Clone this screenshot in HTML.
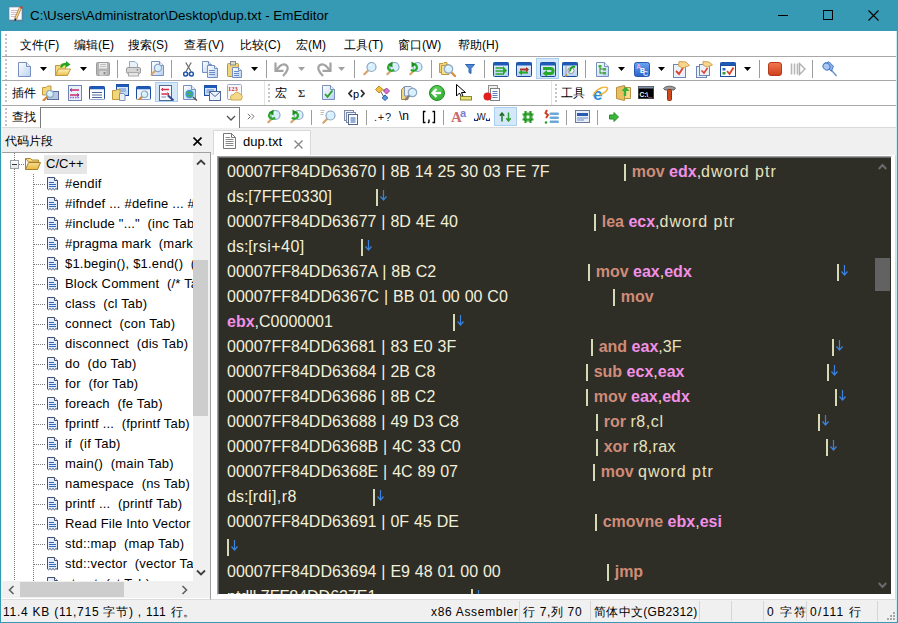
<!DOCTYPE html>
<html><head><meta charset="utf-8">
<style>
*{margin:0;padding:0;box-sizing:border-box}
html,body{width:898px;height:623px;overflow:hidden;background:#fff;font-family:"Liberation Sans",sans-serif;color:#000}
.a{position:absolute}
.t{position:absolute;white-space:pre;line-height:1}
#title{left:0;top:0;width:898px;height:31px;background:#369ab5}
#menu{left:1px;top:31px;width:896px;height:27px;background:#fff;border-bottom:1px solid #dadada}
.hl{position:absolute;height:1px;background:#a8a8a8}
.vs{position:absolute;width:1px;background:#a0a0a0}
.grip{position:absolute;width:2px;background-image:linear-gradient(#c4c4c4 50%,transparent 50%);background-size:2px 4px}
.m{font-size:12px;top:39px}
#ed{left:219px;top:158px;width:672px;height:436px;background:#2e2d26;overflow:hidden}
.ln{position:absolute;left:8px;font-size:16px;color:#f2f0da;white-space:pre;line-height:1;word-spacing:0.45px}
.p{position:absolute;font-size:16px;color:#e6e2bf;white-space:pre;line-height:1}
.k{color:#d08c78;font-weight:bold}
.r{color:#f290e6;font-weight:bold}
.w{color:#f2f0da}
.ar{color:#3b94e6}
.pp{position:absolute;width:2px;height:17px;background:#d4d9b6}
.dn{position:absolute}
.tr{position:absolute;font-size:13px;white-space:pre;line-height:1;color:#000}
.st{position:absolute;font-size:12px;white-space:pre;line-height:1;top:606px}
.dv{position:absolute;width:1px;background-image:linear-gradient(#7a7a7a 50%,transparent 50%);background-size:1px 2px}
.dh{position:absolute;height:1px;background-image:linear-gradient(90deg,#7a7a7a 50%,transparent 50%);background-size:2px 1px}
.ss{position:absolute;top:601px;width:1px;height:20px;background:#d6d6d6}
</style></head><body>
<!-- window border -->
<div class="a" style="left:0;top:0;width:898px;height:623px;background:#369ab5"></div>
<div class="a" style="left:1px;top:31px;width:896px;height:591px;background:#fff"></div>

<!-- title bar -->
<div id="title" class="a">
  <svg class="a" style="left:8px;top:6px" width="17" height="17"><rect x="2" y="2" width="14" height="14" fill="#5a7fa0" opacity="0.5"/><rect x="1" y="1" width="13" height="13" fill="#f8fbff" stroke="#6a7a9a" stroke-width="0.6"/><path d="M3 4.5H10M3 6.5H10M3 8.5H9M3 10.5H8" stroke="#c8a0a0" stroke-width="0.7"/><path d="M12.5 1.5L7.5 13" stroke="#b07830" stroke-width="2.8"/><path d="M12.5 1.5L7.5 13" stroke="#f2d890" stroke-width="1.4"/><path d="M12.3 1L14.3 2" stroke="#d04020" stroke-width="2"/><path d="M7.6 12.5L7 14.5" stroke="#202020" stroke-width="1.6"/></svg>
  <div class="t" style="left:30px;top:9px;font-size:13.4px;color:#000">C:\Users\Administrator\Desktop\dup.txt - EmEditor</div>
  <div class="a" style="left:778px;top:15px;width:10px;height:1px;background:#000"></div>
  <div class="a" style="left:823px;top:10px;width:10px;height:10px;border:1px solid #000"></div>
  <svg class="a" style="left:868px;top:10px" width="11" height="11"><path d="M0.5 0.5L10.5 10.5M10.5 0.5L0.5 10.5" stroke="#000" stroke-width="1.1"/></svg>
</div>

<!-- menu -->
<div class="grip" style="left:5px;top:34px;height:22px"></div>
<div class="t m" style="left:20px">文件(F)</div>
<div class="t m" style="left:74px">编辑(E)</div>
<div class="t m" style="left:128px">搜索(S)</div>
<div class="t m" style="left:184px">查看(V)</div>
<div class="t m" style="left:240px">比较(C)</div>
<div class="t m" style="left:296px">宏(M)</div>
<div class="t m" style="left:344px">工具(T)</div>
<div class="t m" style="left:398px">窗口(W)</div>
<div class="t m" style="left:458px">帮助(H)</div>

<div class="hl" style="left:1px;top:56px;width:896px"></div>
<div class="hl" style="left:1px;top:80px;width:896px"></div>
<div class="hl" style="left:1px;top:105px;width:896px"></div>
<div class="hl" style="left:1px;top:127px;width:896px;background:#dadada"></div>

<!-- toolbar grips -->
<div class="grip" style="left:5px;top:59px;height:21px"></div>
<div class="grip" style="left:5px;top:84px;height:19px"></div>
<div class="grip" style="left:5px;top:108px;height:18px"></div>

<!-- plugin toolbar text -->

<!-- find input -->
<div class="a" style="left:40px;top:107px;width:200px;height:21px;border:1px solid #7c7c7c;border-bottom:none;background:#fff"></div>

<!--tb-->
<svg class="a" style="left:0;top:0" width="0" height="0"><defs><linearGradient id="gdoc" x1="0" y1="0" x2="1" y2="1"><stop offset="0" stop-color="#fff"/><stop offset="1" stop-color="#b9d1f2"/></linearGradient><linearGradient id="gfold" x1="0" y1="0" x2="0" y2="1"><stop offset="0" stop-color="#fff4c0"/><stop offset="1" stop-color="#e9bd4a"/></linearGradient><linearGradient id="gwin" x1="0" y1="0" x2="0" y2="1"><stop offset="0" stop-color="#e6f2ff"/><stop offset="1" stop-color="#b5d3f5"/></linearGradient><linearGradient id="gred" x1="0" y1="0" x2="0" y2="1"><stop offset="0" stop-color="#f27a50"/><stop offset="1" stop-color="#cf3f1c"/></linearGradient><linearGradient id="gabc" x1="0" y1="0" x2="0" y2="1"><stop offset="0" stop-color="#6aa6f0"/><stop offset="1" stop-color="#2a62c8"/></linearGradient></defs></svg>
<svg class="a" style="left:18px;top:62px" width="13" height="15"><path d="M0.5 0.5H8.5L12.5 4.5V14.5H0.5Z" fill="url(#gdoc)" stroke="#7890c0"/><path d="M8.5 0.5V4.5H12.5" fill="#e8f0fb" stroke="#7890c0"/></svg>
<svg class="a" style="left:40px;top:67px" width="7" height="4"><path d="M0 0H7L3.5 4Z" fill="#000"/></svg>
<svg class="a" style="left:55px;top:61px" width="16" height="16"><path d="M0.5 4.5H5L6.5 3H10.5V14.5H0.5Z" fill="#f3d87a" stroke="#c19a3e"/><path d="M0.5 14.5L3.5 8H15.5L12.5 14.5Z" fill="url(#gfold)" stroke="#c19a3e"/><path d="M6 6.5A5 4.5 0 0 1 12.5 3.2" stroke="#22a325" stroke-width="2.2" fill="none"/><path d="M11 0L15.5 3.5L11 6.5Z" fill="#22a325"/></svg>
<svg class="a" style="left:80px;top:67px" width="7" height="4"><path d="M0 0H7L3.5 4Z" fill="#000"/></svg>
<svg class="a" style="left:96px;top:62px" width="14" height="14"><rect x="0.5" y="0.5" width="13" height="13" rx="1" fill="#b4b4b4" stroke="#9c9c9c"/><rect x="3" y="1" width="8" height="5.5" fill="#ececec"/><path d="M4 2.5H10M4 4.5H10" stroke="#c0c0c0"/><rect x="3.5" y="9" width="7" height="4.5" fill="#d6d6d6"/><rect x="7.5" y="10" width="2" height="2.5" fill="#8a8a8a"/></svg>
<div class="a" style="left:117px;top:60px;width:1px;height:18px;background:#9c9c9c"></div>
<svg class="a" style="left:126px;top:61px" width="15" height="16"><path d="M3.5 0.5L9 0.5L11.5 3V7H3.5Z" fill="#e8f0f8" stroke="#9aaac0"/><rect x="0.5" y="6.5" width="14" height="6" rx="1.5" fill="#d4d4d4" stroke="#9c9c9c"/><rect x="2.5" y="11.5" width="10" height="3.5" fill="#e6e6e6" stroke="#aaaaaa"/><circle cx="11.5" cy="8.8" r="0.9" fill="#808080"/></svg>
<svg class="a" style="left:150px;top:61px" width="14" height="16"><path d="M1.5 0.5H9.5L13.5 4.5V14.5H1.5Z" fill="url(#gdoc)" stroke="#7890c0"/><path d="M9.5 0.5V4.5H13.5" fill="#e8f0fb" stroke="#7890c0"/><path d="M5.5 9.5L1.5 13.5" stroke="#d9a26c" stroke-width="2.2" stroke-linecap="round"/><circle cx="8" cy="7" r="3.6" fill="#d6f0fd" stroke="#8ea6c2" stroke-width="1.2"/><path d="M6.0 6.0A2.2 2.2 0 0 1 8.0 4.5" stroke="#fff" stroke-width="1" fill="none"/></svg>
<div class="a" style="left:171px;top:60px;width:1px;height:18px;background:#9c9c9c"></div>
<svg class="a" style="left:183px;top:62px" width="11" height="15"><path d="M3 9.5L8.2 0.5M8 9.5L2.8 0.5" stroke="#6f6f6f" stroke-width="1.3"/><circle cx="2.6" cy="12" r="2" fill="none" stroke="#1f56b0" stroke-width="1.6"/><circle cx="8.4" cy="12" r="2" fill="none" stroke="#1f56b0" stroke-width="1.6"/></svg>
<svg class="a" style="left:202px;top:61px" width="17" height="17"><path d="M0.5 0.5H6.5L9.5 3.5V11.5H0.5Z" fill="url(#gdoc)" stroke="#7890c0"/><path d="M6.5 0.5V3.5H9.5" fill="#e8f0fb" stroke="#7890c0"/><path d="M5.5 4.5H12.5L15.5 7.5V16.5H5.5Z" fill="url(#gdoc)" stroke="#7890c0"/><path d="M12.5 4.5V7.5H15.5" fill="#e8f0fb" stroke="#7890c0"/><path d="M7 9.5H13" stroke="#6b8cc8"/><path d="M7 11.5H13" stroke="#6b8cc8"/><path d="M7 13.5H13" stroke="#6b8cc8"/></svg>
<svg class="a" style="left:227px;top:61px" width="16" height="17"><rect x="0.5" y="2.5" width="11" height="13" rx="1" fill="#f0d67a" stroke="#b69746"/><rect x="3.5" y="0.5" width="5" height="3.5" fill="#d8d8d8" stroke="#8a8a8a"/><path d="M5.5 6.5H11.5L14.5 9.5V16.5H5.5Z" fill="url(#gdoc)" stroke="#7890c0"/><path d="M11.5 6.5V9.5H14.5" fill="#e8f0fb" stroke="#7890c0"/><path d="M7 10.5H12" stroke="#6b8cc8"/><path d="M7 12.5H12" stroke="#6b8cc8"/><path d="M7 14.5H12" stroke="#6b8cc8"/></svg>
<svg class="a" style="left:251px;top:67px" width="7" height="4"><path d="M0 0H7L3.5 4Z" fill="#000"/></svg>
<div class="a" style="left:266px;top:60px;width:1px;height:18px;background:#9c9c9c"></div>
<svg class="a" style="left:274px;top:61px" width="17" height="16"><path d="M1.5 1.5V9.8H9.5" stroke="#a3a3a3" stroke-width="2.2" fill="none"/><path d="M2.5 9C6 4 9.5 2.5 12 4C15 6 14 10 9 15" stroke="#a3a3a3" stroke-width="2.2" fill="none"/></svg>
<svg class="a" style="left:298px;top:67px" width="7" height="4"><path d="M0 0H7L3.5 4Z" fill="#a0a0a0"/></svg>
<svg class="a" style="left:315px;top:61px" width="17" height="16"><path d="M15.5 1.5V9.8H7.5" stroke="#a3a3a3" stroke-width="2.2" fill="none"/><path d="M14.5 9C11 4 7.5 2.5 5 4C2 6 3 10 8 15" stroke="#a3a3a3" stroke-width="2.2" fill="none"/></svg>
<svg class="a" style="left:338px;top:67px" width="7" height="4"><path d="M0 0H7L3.5 4Z" fill="#a0a0a0"/></svg>
<div class="a" style="left:354px;top:60px;width:1px;height:18px;background:#9c9c9c"></div>
<svg class="a" style="left:361px;top:61px" width="17" height="17"><path d="M7.3 9.2L3.3 13.2" stroke="#d9a26c" stroke-width="2.2" stroke-linecap="round"/><circle cx="10.5" cy="6" r="4.5" fill="#d6f0fd" stroke="#8ea6c2" stroke-width="1.2"/><path d="M8.5 5.0A2.2 2.2 0 0 1 10.5 3.5" stroke="#fff" stroke-width="1" fill="none"/></svg>
<svg class="a" style="left:384px;top:61px" width="17" height="17"><path d="M7.3 9.2L3.3 13.2" stroke="#d9a26c" stroke-width="2.2" stroke-linecap="round"/><circle cx="10.5" cy="6" r="4.5" fill="#d6f0fd" stroke="#8ea6c2" stroke-width="1.2"/><path d="M8.5 5.0A2.2 2.2 0 0 1 10.5 3.5" stroke="#fff" stroke-width="1" fill="none"/><path d="M7 3.2A3.3 3.3 0 1 0 10 8.5" stroke="#2aa82a" stroke-width="2.2" fill="none"/><path d="M4 3.5L8.5 0.5V6.5Z" fill="#1e8e1e"/></svg>
<svg class="a" style="left:407px;top:61px" width="17" height="17"><path d="M7.3 9.2L3.3 13.2" stroke="#d9a26c" stroke-width="2.2" stroke-linecap="round"/><circle cx="10.5" cy="6" r="4.5" fill="#d6f0fd" stroke="#8ea6c2" stroke-width="1.2"/><path d="M8.5 5.0A2.2 2.2 0 0 1 10.5 3.5" stroke="#fff" stroke-width="1" fill="none"/><path d="M7 3.2A3.3 3.3 0 1 1 4 8.5" stroke="#2aa82a" stroke-width="2.2" fill="none"/><path d="M4.5 0.5L9 3.5L4.5 6.5Z" fill="#1e8e1e"/></svg>
<div class="a" style="left:431px;top:60px;width:1px;height:18px;background:#9c9c9c"></div>
<svg class="a" style="left:439px;top:61px" width="17" height="17"><path d="M0.5 2.5H4L5 1.5H8V11.5H0.5Z" fill="#f0d47a" stroke="#c19a3e"/><path d="M2.5 4.5H6L7 3.5H10V13.5H2.5Z" fill="#f5df92" stroke="#c19a3e"/><path d="M12.5 11.5L16 15" stroke="#d58a3a" stroke-width="2.2" stroke-linecap="round"/><circle cx="9.5" cy="8" r="4.2" fill="#d6f0fd" stroke="#8ea6c2" stroke-width="1.2"/><path d="M7.5 7.0A2.2 2.2 0 0 1 9.5 5.5" stroke="#fff" stroke-width="1" fill="none"/></svg>
<svg class="a" style="left:465px;top:64px" width="10" height="10"><path d="M0.5 0.5H9.5L6 4.5V9.5L4 8.5V4.5Z" fill="#4a86d4" stroke="#2f64b0"/></svg>
<div class="a" style="left:484px;top:60px;width:1px;height:18px;background:#9c9c9c"></div>
<svg class="a" style="left:493px;top:62px" width="16" height="15"><rect x="0.5" y="0.5" width="15" height="14" rx="1" fill="url(#gwin)" stroke="#1d4c9c"/><rect x="0.5" y="0.5" width="15" height="3" fill="#1e5bb8"/><path d="M2.5 6H11M2.5 9H11M2.5 12H11" stroke="#2aa82a" stroke-width="1.6"/><path d="M10 4L14 8.5L10 13Z" fill="#2aa82a"/></svg>
<svg class="a" style="left:516px;top:62px" width="16" height="15"><rect x="0.5" y="0.5" width="15" height="14" rx="1" fill="url(#gwin)" stroke="#1d4c9c"/><rect x="0.5" y="0.5" width="15" height="3" fill="#1e5bb8"/><path d="M4 7.5H12" stroke="#b03020" stroke-width="2"/><path d="M12 10.5H5" stroke="#28a828" stroke-width="2.2"/><path d="M6 7.5L2.5 10.5L6 13.5Z" fill="#28a828"/><path d="M10 5L13 7.5L10 10Z" fill="#b03020"/></svg>
<div class="a" style="left:536px;top:58px;width:23px;height:21px;background:#d5e8f9;border:1px solid #a9d0f2"></div>
<svg class="a" style="left:540px;top:62px" width="16" height="15"><rect x="0.5" y="0.5" width="15" height="14" rx="1" fill="url(#gwin)" stroke="#1d4c9c"/><rect x="0.5" y="0.5" width="15" height="3" fill="#1e5bb8"/><path d="M3 6.5H10.5A2.5 2.5 0 0 1 10.5 11.5H6" stroke="#2aa82a" stroke-width="3" fill="none"/><path d="M7 8L2.5 11.5L7 14.5Z" fill="#2aa82a"/></svg>
<svg class="a" style="left:562px;top:62px" width="16" height="15"><rect x="0.5" y="0.5" width="15" height="14" rx="1" fill="url(#gwin)" stroke="#1d4c9c"/><rect x="0.5" y="0.5" width="15" height="3" fill="#1e5bb8"/><path d="M4 4V14" stroke="#a0a0a0"/><circle cx="9" cy="8.5" r="3" fill="#fff" stroke="#909090"/><path d="M8 9.5A4 4 0 0 1 13 5" stroke="#22a325" stroke-width="2" fill="none"/><path d="M5 12.5L3 14.5" stroke="#d58a3a" stroke-width="1.6"/></svg>
<div class="a" style="left:585px;top:60px;width:1px;height:18px;background:#9c9c9c"></div>
<svg class="a" style="left:596px;top:62px" width="13" height="15"><path d="M0.5 0.5H8.5L12.5 4.5V14.5H0.5Z" fill="url(#gdoc)" stroke="#7890c0"/><path d="M8.5 0.5V4.5H12.5" fill="#e8f0fb" stroke="#7890c0"/><path d="M4 4V11.5M4 7H7M4 11H7" stroke="#2a8a2a"/><rect x="2.5" y="3" width="3" height="2.5" fill="#3cb43c"/><rect x="7" y="6" width="3" height="2.5" fill="#3cb43c"/><rect x="7" y="10" width="3" height="2.5" fill="#3cb43c"/></svg>
<svg class="a" style="left:618px;top:67px" width="7" height="4"><path d="M0 0H7L3.5 4Z" fill="#000"/></svg>
<svg class="a" style="left:634px;top:62px" width="16" height="15"><rect x="0.5" y="0.5" width="15" height="14" rx="2" fill="url(#gabc)" stroke="#2658b0"/><text x="2" y="7" font-size="7" font-family="Liberation Sans" fill="#f2a8e8" font-weight="bold">A</text><text x="6" y="10.5" font-size="7" font-family="Liberation Sans" fill="#fff" font-weight="bold">B</text><text x="9" y="14" font-size="7" font-family="Liberation Sans" fill="#d8e8ff" font-weight="bold">C</text></svg>
<svg class="a" style="left:658px;top:67px" width="7" height="4"><path d="M0 0H7L3.5 4Z" fill="#000"/></svg>
<svg class="a" style="left:673px;top:61px" width="17" height="17"><rect x="0.5" y="3.5" width="12" height="13" fill="#e9f1fb" stroke="#6d84b4"/><path d="M3 10L6 13L10.5 6" stroke="#e0402a" stroke-width="1.8" fill="none"/><path d="M6 0.5L13 1L16.5 4.5L10 7L5.5 5Z" fill="#f6d590" stroke="#d3a050"/></svg>
<svg class="a" style="left:696px;top:61px" width="17" height="17"><rect x="0.5" y="5.5" width="10" height="11" fill="#e9f1fb" stroke="#6d84b4"/><rect x="3.5" y="3.5" width="10" height="11" fill="#e9f1fb" stroke="#6d84b4"/><path d="M5.5 9.5L8 12L11.5 7" stroke="#e0402a" stroke-width="1.6" fill="none"/><path d="M7 0.5L13 1L16.5 4L11 6L7 4Z" fill="#f6d590" stroke="#d3a050"/></svg>
<svg class="a" style="left:720px;top:62px" width="16" height="15"><rect x="0.5" y="0.5" width="15" height="14" rx="1" fill="url(#gwin)" stroke="#1d4c9c"/><rect x="0.5" y="0.5" width="15" height="3" fill="#1e5bb8"/><rect x="0.5" y="3.5" width="15" height="11" fill="#fff" stroke="#1d4c9c"/><rect x="2.5" y="6" width="3" height="2.5" fill="#2a6ac8"/><rect x="2.5" y="10" width="3" height="2.5" fill="#28a030"/><path d="M7 9L9.5 12L13.5 5.5" stroke="#e0402a" stroke-width="1.8" fill="none"/></svg>
<svg class="a" style="left:744px;top:67px" width="7" height="4"><path d="M0 0H7L3.5 4Z" fill="#000"/></svg>
<div class="a" style="left:759px;top:60px;width:1px;height:18px;background:#9c9c9c"></div>
<svg class="a" style="left:768px;top:62px" width="14" height="14"><rect x="0.5" y="0.5" width="13" height="13" rx="2.5" fill="url(#gred)" stroke="#b63a1a"/></svg>
<svg class="a" style="left:790px;top:62px" width="16" height="14"><path d="M1.5 1.5V12.5M4.5 1.5V12.5M7.5 1.5V12.5" stroke="#b8b8b8" stroke-width="1.6"/><path d="M9.5 1.5L15 7L9.5 12.5Z" fill="#fff" stroke="#b0b0b0" stroke-width="1.4"/></svg>
<div class="a" style="left:812px;top:60px;width:1px;height:18px;background:#9c9c9c"></div>
<svg class="a" style="left:821px;top:61px" width="17" height="17"><path d="M9 7.5L15.5 15" stroke="#6a90d0" stroke-width="1.4"/><path d="M3 3L8 0.8L12.5 5.3L10.2 10.3Z" fill="#8bb4ec" stroke="#4a78c0"/><ellipse cx="5.5" cy="5.5" rx="3.2" ry="3.6" transform="rotate(-45 5.5 5.5)" fill="#a9c9f4" stroke="#4a78c0"/></svg>
<div class="t" style="left:12px;top:87px;font-size:12px">插件</div>
<svg class="a" style="left:42px;top:85px" width="17" height="16"><path d="M0.5 2.5H4L5.5 1H9V10H0.5Z" fill="#f2d67a" stroke="#c19a3e"/><rect x="5.5" y="6.5" width="11" height="8" fill="#b8c8e0" stroke="#5a70a0"/><path d="M5.6 11.4L1.6 15.4" stroke="#d58a3a" stroke-width="2.2" stroke-linecap="round"/><circle cx="8" cy="9" r="3.4" fill="#d6f0fd" stroke="#8ea6c2" stroke-width="1.2"/><path d="M6.0 8.0A2.2 2.2 0 0 1 8.0 6.5" stroke="#fff" stroke-width="1" fill="none"/></svg>
<svg class="a" style="left:68px;top:85px" width="14" height="16"><rect x="0.5" y="0.5" width="13" height="15" fill="#e9f1fb" stroke="#6d84b4"/><path d="M2 5H11M2 10H11" stroke="#d02a6a" stroke-width="1.4"/><path d="M4 3.5L2 5L4 6.5M9 8.5L11 10L9 11.5" stroke="#7a3ab0" fill="none"/><path d="M2 12.5H11" stroke="#9a5ad0" stroke-width="1.4" stroke-dasharray="1.5 1"/></svg>
<svg class="a" style="left:89px;top:86px" width="16" height="14"><rect x="0.5" y="0.5" width="15" height="13" rx="1" fill="url(#gwin)" stroke="#1d4c9c"/><rect x="0.5" y="0.5" width="15" height="3" fill="#1e5bb8"/><rect x="1" y="3.5" width="14" height="10" fill="#fff"/><path d="M3 6.5H13M3 9H13M3 11.5H13" stroke="#4f6a9a"/></svg>
<svg class="a" style="left:112px;top:84px" width="17" height="17"><rect x="4.5" y="0.5" width="12" height="11" fill="url(#gwin)" stroke="#1d4c9c"/><rect x="4.5" y="0.5" width="12" height="2.5" fill="#1e5bb8"/><path d="M7 5H14M7 7H14" stroke="#6b8cc8"/><path d="M0.5 6.5H4L5 5.5H8V15.5H0.5Z" fill="#f2d67a" stroke="#c19a3e"/><path d="M7.5 9.5H11.5L13 11V16.5H7.5Z" fill="#e8eef8" stroke="#8094b8"/></svg>
<svg class="a" style="left:136px;top:86px" width="15" height="14"><rect x="0.5" y="0.5" width="14" height="13" rx="1" fill="url(#gwin)" stroke="#1d4c9c"/><rect x="0.5" y="0.5" width="14" height="3" fill="#1e5bb8"/><rect x="1" y="3.5" width="13" height="10" fill="#f0f6ff"/><path d="M6.3 10.5L2.3 14.5" stroke="#d58a3a" stroke-width="2.2" stroke-linecap="round"/><circle cx="8.5" cy="8.3" r="3.2" fill="#d6f0fd" stroke="#8ea6c2" stroke-width="1.2"/><path d="M6.5 7.3A2.2 2.2 0 0 1 8.5 5.8" stroke="#fff" stroke-width="1" fill="none"/></svg>
<div class="a" style="left:155px;top:82px;width:23px;height:20px;background:#d5e8f9;border:1px solid #a9d0f2"></div>
<svg class="a" style="left:159px;top:85px" width="16" height="16"><rect x="0.5" y="0.5" width="12" height="15" fill="#f6f8fc" stroke="#53688e"/><path d="M2.5 4.5H10M2.5 9H10" stroke="#d3324a" stroke-width="1.3"/><path d="M4 3L2.5 4.5L4 6M8.5 7.5L10 9L8.5 10.5" stroke="#d3324a" fill="none"/><path d="M2.5 12H7" stroke="#7a8ab0"/><path d="M9 10.5L14.5 15.5" stroke="#2a4a8a" stroke-width="2"/></svg>
<svg class="a" style="left:183px;top:85px" width="15" height="16"><path d="M0.5 0.5H8.5L12.5 4.5V14.5H0.5Z" fill="url(#gdoc)" stroke="#7890c0"/><path d="M8.5 0.5V4.5H12.5" fill="#e8f0fb" stroke="#7890c0"/><circle cx="6.5" cy="9" r="4.2" fill="#3d9ad8"/><path d="M3.5 7.5C5 6 7 9 9 7.5M4 11C6 10 7 12 9.5 10.5" stroke="#46b046" stroke-width="1.6" fill="none"/><path d="M10 12L14 15.5" stroke="#505050" stroke-width="1.4"/></svg>
<svg class="a" style="left:204px;top:85px" width="17" height="16"><rect x="0.5" y="0.5" width="12" height="10" fill="url(#gwin)" stroke="#1d4c9c"/><rect x="0.5" y="0.5" width="12" height="2.5" fill="#1e5bb8"/><path d="M2.5 5H10M2.5 7H10" stroke="#6b8cc8"/><rect x="5.5" y="6.5" width="11" height="9" fill="#eef3fb" stroke="#4f6a9a"/><path d="M6 7L11 11.5L16 7" stroke="#4f6a9a" fill="none"/></svg>
<svg class="a" style="left:227px;top:84px" width="16" height="17"><rect x="0.5" y="0.5" width="14" height="15" rx="1" fill="#f4f7fc" stroke="#9aaacc"/><text x="1" y="6.5" font-size="6.5" font-family="Liberation Serif" fill="#d02a2a" font-weight="bold">123</text><path d="M4 16C3 13 4 10 6 11L8.5 8.5C10.5 7.5 13.5 9.5 15.5 12.5L14 16Z" fill="#f2d888" stroke="#d0a850"/></svg>
<div class="a" style="left:264px;top:81px;width:1px;height:24px;background:#e3e3e3"></div>
<div class="grip" style="left:268px;top:84px;height:19px"></div>
<div class="t" style="left:275px;top:87px;font-size:12px">宏</div>
<div class="t" style="left:298px;top:88px;font-size:11px;font-weight:bold;font-family:Liberation Serif;color:#383838">Σ</div>
<svg class="a" style="left:322px;top:85px" width="13" height="16"><path d="M0.5 0.5H8.5L12.5 4.5V14.5H0.5Z" fill="url(#gdoc)" stroke="#7890c0"/><path d="M8.5 0.5V4.5H12.5" fill="#e8f0fb" stroke="#7890c0"/><path d="M3 9L5.5 11.8L10.5 5.5" stroke="#2aa02a" stroke-width="1.8" fill="none"/></svg>
<svg class="a" style="left:348px;top:87px" width="17" height="14"><path d="M4 3L1 6.5L4 10M13 3L16 6.5L13 10" stroke="#303030" stroke-width="1.8" fill="none"/><text x="5" y="10.5" font-size="11" font-family="Liberation Sans" fill="#000">p</text></svg>
<svg class="a" style="left:375px;top:85px" width="16" height="16"><path d="M4 1L8 4.5L4 8L0.5 4.5Z" fill="#f0c040" stroke="#b88a20"/><path d="M11.5 3L14.5 6L11.5 9L8.5 6Z" fill="#e070d0" stroke="#a040a0"/><path d="M10 10L13 12.8L10 15.5L7 12.8Z" fill="#5a9ae0" stroke="#3060a8"/><path d="M6 7L9 12M8 5L10 5" stroke="#606060"/></svg>
<svg class="a" style="left:401px;top:84px" width="18" height="17"><path d="M0.5 5.5L3 3H7V15.5H0.5Z" fill="#f2d67a" stroke="#a88040"/><path d="M3.5 2.5H10L12 4.5V12H3.5Z" fill="#e8eef8" stroke="#8094b8"/><path d="M8.6 11.4L4.6 15.4" stroke="#808080" stroke-width="2.2" stroke-linecap="round"/><circle cx="11.5" cy="8.5" r="4.2" fill="#d6f0fd" stroke="#8ea6c2" stroke-width="1.2"/><path d="M9.5 7.5A2.2 2.2 0 0 1 11.5 6.0" stroke="#fff" stroke-width="1" fill="none"/></svg>
<svg class="a" style="left:429px;top:85px" width="16" height="16"><circle cx="8" cy="8" r="7.5" fill="#3bb83b" stroke="#238a23"/><circle cx="8" cy="6" r="5" fill="#6ad06a" opacity="0.6"/><path d="M3.5 8H12" stroke="#fff" stroke-width="2.2"/><path d="M7.5 4L3.5 8L7.5 12" stroke="#fff" stroke-width="2.2" fill="none"/></svg>
<svg class="a" style="left:456px;top:84px" width="16" height="17"><path d="M0.5 0.5V12L3.5 9L6 14L7.5 13.5L5.5 8.5H9.5Z" fill="#fff" stroke="#000"/><rect x="4.5" y="12.5" width="11" height="3.5" fill="#e8e070" stroke="#8a8a30"/></svg>
<svg class="a" style="left:483px;top:85px" width="17" height="16"><rect x="5.5" y="0.5" width="9" height="11" fill="#f0f0f0" stroke="#909090"/><rect x="7.5" y="3.5" width="9" height="12" fill="#fff" stroke="#808080"/><path d="M9.5 6.5H14.5M9.5 8.5H14.5M9.5 10.5H14.5M9.5 12.5H14.5" stroke="#5a80c0"/><circle cx="4.5" cy="11.5" r="4" fill="#e02020"/></svg>
<div class="a" style="left:551px;top:81px;width:1px;height:24px;background:#e3e3e3"></div>
<div class="grip" style="left:555px;top:84px;height:19px"></div>
<div class="t" style="left:561px;top:87px;font-size:12px">工具</div>
<svg class="a" style="left:592px;top:85px" width="17" height="16"><text x="1" y="14.5" font-size="17" font-family="Liberation Sans" font-weight="bold" fill="#2a8ae0">e</text><path d="M1 11C4 3 13 1 15.5 3C16 5 12 8 8 10" stroke="#f0b030" stroke-width="1.4" fill="none"/></svg>
<svg class="a" style="left:616px;top:85px" width="16" height="16"><path d="M0.5 2.5L8.5 0.5V15.5L0.5 13.5Z" fill="#e8c060" stroke="#b89040"/><path d="M8.5 2.5H14.5V13.5H8.5Z" fill="#f5dc90" stroke="#b89040"/><path d="M9 11V5" stroke="#3ab03a" stroke-width="2.4"/><path d="M5.5 6L9.5 1.5L13.5 6Z" fill="#3ab03a"/></svg>
<svg class="a" style="left:638px;top:86px" width="16" height="13"><rect x="0.5" y="0.5" width="15" height="12" fill="#000" stroke="#404040"/><rect x="0.5" y="0.5" width="15" height="2" fill="#8090a8"/><text x="1.5" y="10.5" font-size="6.5" font-family="Liberation Sans" font-weight="bold" fill="#fff">C:\_</text></svg>
<svg class="a" style="left:663px;top:85px" width="13" height="16"><path d="M0.5 3.5C3 0.5 9 0.5 12.5 3L11 5H2Z" fill="#9a9a9a" stroke="#606060"/><rect x="4.5" y="4.5" width="4" height="11" rx="1" fill="#d04a20" stroke="#983010"/></svg>
<div class="t" style="left:12px;top:111px;font-size:12px">查找</div>
<svg class="a" style="left:226px;top:115px" width="10" height="6"><path d="M1 1L5 5L9 1" stroke="#505050" stroke-width="1.3" fill="none"/></svg>
<svg class="a" style="left:247px;top:113px" width="8" height="7"><path d="M0.8 0.8L3.5 3.5L0.8 6.2M4.3 0.8L7 3.5L4.3 6.2" stroke="#707070" stroke-width="1" fill="none"/></svg>
<svg class="a" style="left:265px;top:109px" width="17" height="17"><path d="M7.3 9.2L3.3 13.2" stroke="#d9a26c" stroke-width="2.2" stroke-linecap="round"/><circle cx="10.5" cy="6" r="4.5" fill="#d6f0fd" stroke="#8ea6c2" stroke-width="1.2"/><path d="M8.5 5.0A2.2 2.2 0 0 1 10.5 3.5" stroke="#fff" stroke-width="1" fill="none"/><path d="M7 3.2A3.3 3.3 0 1 0 10 8.5" stroke="#2aa82a" stroke-width="2.2" fill="none"/><path d="M4 3.5L8.5 0.5V6.5Z" fill="#1e8e1e"/></svg>
<svg class="a" style="left:288px;top:109px" width="17" height="17"><path d="M7.3 9.2L3.3 13.2" stroke="#d9a26c" stroke-width="2.2" stroke-linecap="round"/><circle cx="10.5" cy="6" r="4.5" fill="#d6f0fd" stroke="#8ea6c2" stroke-width="1.2"/><path d="M8.5 5.0A2.2 2.2 0 0 1 10.5 3.5" stroke="#fff" stroke-width="1" fill="none"/><path d="M7 3.2A3.3 3.3 0 1 1 4 8.5" stroke="#2aa82a" stroke-width="2.2" fill="none"/><path d="M4.5 0.5L9 3.5L4.5 6.5Z" fill="#1e8e1e"/></svg>
<div class="a" style="left:311px;top:110px;width:1px;height:15px;background:#9c9c9c"></div>
<svg class="a" style="left:320px;top:109px" width="17" height="17"><path d="M7.3 9.7L3.3 13.7" stroke="#d9a26c" stroke-width="2.2" stroke-linecap="round"/><circle cx="10.5" cy="6.5" r="4.5" fill="#d6f0fd" stroke="#8ea6c2" stroke-width="1.2"/><path d="M8.5 5.5A2.2 2.2 0 0 1 10.5 4.0" stroke="#fff" stroke-width="1" fill="none"/><path d="M0.5 1.5H4.5M0.5 3.5H4M0.5 5.5H3.5" stroke="#b8b8b8" stroke-width="0.9"/></svg>
<svg class="a" style="left:344px;top:110px" width="14" height="15"><rect x="0.5" y="0.5" width="9" height="10" fill="#eef2f8" stroke="#7a8aa8"/><rect x="2.5" y="2.5" width="9" height="10" fill="#eef2f8" stroke="#7a8aa8"/><rect x="4.5" y="4.5" width="9" height="10" fill="#fff" stroke="#53688e"/><path d="M6.5 8H11.5M6.5 10H11.5M6.5 12H11.5" stroke="#2a5aa8"/></svg>
<div class="a" style="left:366px;top:110px;width:1px;height:15px;background:#9c9c9c"></div>
<div class="t" style="left:374px;top:112px;font-size:11px;letter-spacing:0.8px;color:#202020">.+?</div>
<div class="t" style="left:399px;top:110px;font-size:12px;">\n</div>
<svg class="a" style="left:422px;top:110px" width="14" height="14"><path d="M3.5 1.5H1.5V12.5H3.5M10.5 1.5H12.5V12.5H10.5" stroke="#000" stroke-width="1.3" fill="none"/><path d="M7 9.5V12L6 13" stroke="#000" stroke-width="1.4" fill="none"/></svg>
<div class="a" style="left:443px;top:110px;width:1px;height:15px;background:#9c9c9c"></div>
<div class="t" style="left:451px;top:110px;font-size:15px;font-family:Liberation Serif;font-weight:bold;color:#c86a6a">A</div>
<div class="t" style="left:460px;top:108px;font-size:11px;color:#7a7ed0;font-weight:bold">a</div>
<div class="t" style="left:477px;top:110px;font-size:12px;color:#303030">w</div>
<svg class="a" style="left:474px;top:118px" width="16" height="4"><path d="M0.5 0.5V2.5H3.5V0.5M12.5 0.5V2.5H15.5V0.5" stroke="#1a2a90" stroke-width="1.2" fill="none"/></svg>
<div class="a" style="left:494px;top:107px;width:23px;height:19px;background:#d5e8f9;border:1px solid #a9d0f2"></div>
<svg class="a" style="left:499px;top:112px" width="13" height="10"><path d="M3 9.5V1.5M0.8 3.8L3 1L5.2 3.8" stroke="#1e6e1e" stroke-width="1.4" fill="none"/><path d="M9.5 0.5V8.5M7.3 6.2L9.5 9L11.7 6.2" stroke="#2a9a2a" stroke-width="1.4" fill="none"/></svg>
<svg class="a" style="left:522px;top:110px" width="12" height="14"><path d="M3.5 1V13M8.5 1V13M0.5 4.5H11.5M0.5 9.5H11.5" stroke="#2aa52a" stroke-width="2.2"/><rect x="2" y="3" width="8" height="8" rx="3" fill="none" stroke="#1a801a" stroke-width="0.8"/></svg>
<svg class="a" style="left:543px;top:109px" width="17" height="16"><path d="M4 1L2.5 4L5 6L3 9" stroke="#d04020" stroke-width="2" fill="none"/><circle cx="3" cy="13.5" r="1.3" fill="#2aa02a"/><rect x="6.5" y="3.5" width="9.5" height="2.5" rx="1.2" fill="#6aa8d8"/><rect x="6.5" y="7.5" width="9.5" height="2.5" rx="1.2" fill="#6aa8d8"/><rect x="6.5" y="11.5" width="9.5" height="2.5" rx="1.2" fill="#6aa8d8"/></svg>
<div class="a" style="left:566px;top:110px;width:1px;height:15px;background:#9c9c9c"></div>
<svg class="a" style="left:575px;top:110px" width="15" height="13"><rect x="0.5" y="0.5" width="14" height="12" fill="#e8eef8" stroke="#6b7a98"/><rect x="2" y="3" width="11" height="3" fill="#2a5ab0"/><path d="M2 8H13M2 10H9" stroke="#6b8cc8"/></svg>
<div class="a" style="left:597px;top:110px;width:1px;height:15px;background:#9c9c9c"></div>
<svg class="a" style="left:609px;top:112px" width="10" height="10"><path d="M0.5 3H5V0.5L9.5 5L5 9.5V7H0.5Z" fill="#3ab83a" stroke="#2a8a2a"/></svg>
<!--/tb-->
<!-- content area bg -->
<div class="a" style="left:1px;top:128px;width:896px;height:472px;background:#f0f0f0"></div>

<!-- left panel -->
<div class="t" style="left:5px;top:135px;font-size:12px">代码片段</div>
<svg class="a" style="left:193px;top:137px" width="9" height="9"><path d="M0.5 0.5L8.5 8.5M8.5 0.5L0.5 8.5" stroke="#000" stroke-width="1.6"/></svg>
<div class="a" style="left:1px;top:152px;width:210px;height:448px;background:#fff;border:1px solid #a0a0a0;border-left-color:#dcdcdc;border-bottom-color:#dcdcdc"></div>

<div id="tree" class="a" style="left:2px;top:153px;width:191px;height:428px;overflow:hidden;background:#fff">
<div class="dv" style="left:12px;top:0px;height:428px"></div>
<div class="dv" style="left:31px;top:21px;height:420px"></div>
<div class="dh" style="left:17px;top:11px;width:6px"></div>
<div class="a" style="left:8px;top:7px;width:9px;height:9px;border:1px solid #9aa0a8;background:linear-gradient(#fff,#e4e6ea)"></div>
<div class="a" style="left:10px;top:11px;width:5px;height:1px;background:#333"></div>
<svg class="a" style="left:23px;top:4px" width="17" height="14"><defs><linearGradient id="fg" x1="0" y1="0" x2="0" y2="1"><stop offset="0" stop-color="#fff2b8"/><stop offset="1" stop-color="#e8b840"/></linearGradient></defs><path d="M0.5 1.5H5.5L7 3H13.5V5H3.5Z" fill="#f6dc88" stroke="#b08830"/><path d="M0.5 1.5V12.5H12.5L15.5 5.5H3.5L0.5 12.5" fill="url(#fg)" stroke="#a8802a"/></svg>
<div class="a" style="left:42px;top:2px;width:43px;height:19px;background:#e6e6e6"></div>
<div class="tr" style="left:44px;top:4px">C/C++</div>
<div class="dh" style="left:32px;top:31px;width:11px"></div>
<svg class="a" style="left:44px;top:24px" width="13" height="14"><path d="M1.5 0.5H8.5L11.5 3.5V12.5L10 11.5L8.5 12.8L7 11.5L5.5 12.8L4 11.5L2.5 12.8L1.5 12Z" fill="#e4edf9" stroke="#3e4e70"/><path d="M8.5 0.5V3.5H11.5" fill="#fff" stroke="#3e4e70"/><path d="M3 5.5H8M3 7.5H10M3 9.5H10" stroke="#2f6ac4" stroke-width="1"/></svg>
<div class="tr" style="left:63px;top:24px;letter-spacing:0.2px">#endif</div>
<div class="dh" style="left:32px;top:51px;width:11px"></div>
<svg class="a" style="left:44px;top:44px" width="13" height="14"><path d="M1.5 0.5H8.5L11.5 3.5V12.5L10 11.5L8.5 12.8L7 11.5L5.5 12.8L4 11.5L2.5 12.8L1.5 12Z" fill="#e4edf9" stroke="#3e4e70"/><path d="M8.5 0.5V3.5H11.5" fill="#fff" stroke="#3e4e70"/><path d="M3 5.5H8M3 7.5H10M3 9.5H10" stroke="#2f6ac4" stroke-width="1"/></svg>
<div class="tr" style="left:63px;top:44px;letter-spacing:0.2px">#ifndef ... #define ... #endif</div>
<div class="dh" style="left:32px;top:71px;width:11px"></div>
<svg class="a" style="left:44px;top:64px" width="13" height="14"><path d="M1.5 0.5H8.5L11.5 3.5V12.5L10 11.5L8.5 12.8L7 11.5L5.5 12.8L4 11.5L2.5 12.8L1.5 12Z" fill="#e4edf9" stroke="#3e4e70"/><path d="M8.5 0.5V3.5H11.5" fill="#fff" stroke="#3e4e70"/><path d="M3 5.5H8M3 7.5H10M3 9.5H10" stroke="#2f6ac4" stroke-width="1"/></svg>
<div class="tr" style="left:63px;top:64px;letter-spacing:0.2px">#include &quot;...&quot;  (inc Tab)</div>
<div class="dh" style="left:32px;top:91px;width:11px"></div>
<svg class="a" style="left:44px;top:84px" width="13" height="14"><path d="M1.5 0.5H8.5L11.5 3.5V12.5L10 11.5L8.5 12.8L7 11.5L5.5 12.8L4 11.5L2.5 12.8L1.5 12Z" fill="#e4edf9" stroke="#3e4e70"/><path d="M8.5 0.5V3.5H11.5" fill="#fff" stroke="#3e4e70"/><path d="M3 5.5H8M3 7.5H10M3 9.5H10" stroke="#2f6ac4" stroke-width="1"/></svg>
<div class="tr" style="left:63px;top:84px;letter-spacing:0.2px">#pragma mark  (mark Tab)</div>
<div class="dh" style="left:32px;top:111px;width:11px"></div>
<svg class="a" style="left:44px;top:104px" width="13" height="14"><path d="M1.5 0.5H8.5L11.5 3.5V12.5L10 11.5L8.5 12.8L7 11.5L5.5 12.8L4 11.5L2.5 12.8L1.5 12Z" fill="#e4edf9" stroke="#3e4e70"/><path d="M8.5 0.5V3.5H11.5" fill="#fff" stroke="#3e4e70"/><path d="M3 5.5H8M3 7.5H10M3 9.5H10" stroke="#2f6ac4" stroke-width="1"/></svg>
<div class="tr" style="left:63px;top:104px;letter-spacing:0.2px">$1.begin(), $1.end()  (be Tab)</div>
<div class="dh" style="left:32px;top:131px;width:11px"></div>
<svg class="a" style="left:44px;top:124px" width="13" height="14"><path d="M1.5 0.5H8.5L11.5 3.5V12.5L10 11.5L8.5 12.8L7 11.5L5.5 12.8L4 11.5L2.5 12.8L1.5 12Z" fill="#e4edf9" stroke="#3e4e70"/><path d="M8.5 0.5V3.5H11.5" fill="#fff" stroke="#3e4e70"/><path d="M3 5.5H8M3 7.5H10M3 9.5H10" stroke="#2f6ac4" stroke-width="1"/></svg>
<div class="tr" style="left:63px;top:124px;letter-spacing:0.2px">Block Comment  (/* Tab)</div>
<div class="dh" style="left:32px;top:151px;width:11px"></div>
<svg class="a" style="left:44px;top:144px" width="13" height="14"><path d="M1.5 0.5H8.5L11.5 3.5V12.5L10 11.5L8.5 12.8L7 11.5L5.5 12.8L4 11.5L2.5 12.8L1.5 12Z" fill="#e4edf9" stroke="#3e4e70"/><path d="M8.5 0.5V3.5H11.5" fill="#fff" stroke="#3e4e70"/><path d="M3 5.5H8M3 7.5H10M3 9.5H10" stroke="#2f6ac4" stroke-width="1"/></svg>
<div class="tr" style="left:63px;top:144px;letter-spacing:0.2px">class  (cl Tab)</div>
<div class="dh" style="left:32px;top:171px;width:11px"></div>
<svg class="a" style="left:44px;top:164px" width="13" height="14"><path d="M1.5 0.5H8.5L11.5 3.5V12.5L10 11.5L8.5 12.8L7 11.5L5.5 12.8L4 11.5L2.5 12.8L1.5 12Z" fill="#e4edf9" stroke="#3e4e70"/><path d="M8.5 0.5V3.5H11.5" fill="#fff" stroke="#3e4e70"/><path d="M3 5.5H8M3 7.5H10M3 9.5H10" stroke="#2f6ac4" stroke-width="1"/></svg>
<div class="tr" style="left:63px;top:164px;letter-spacing:0.2px">connect  (con Tab)</div>
<div class="dh" style="left:32px;top:191px;width:11px"></div>
<svg class="a" style="left:44px;top:184px" width="13" height="14"><path d="M1.5 0.5H8.5L11.5 3.5V12.5L10 11.5L8.5 12.8L7 11.5L5.5 12.8L4 11.5L2.5 12.8L1.5 12Z" fill="#e4edf9" stroke="#3e4e70"/><path d="M8.5 0.5V3.5H11.5" fill="#fff" stroke="#3e4e70"/><path d="M3 5.5H8M3 7.5H10M3 9.5H10" stroke="#2f6ac4" stroke-width="1"/></svg>
<div class="tr" style="left:63px;top:184px;letter-spacing:0.2px">disconnect  (dis Tab)</div>
<div class="dh" style="left:32px;top:211px;width:11px"></div>
<svg class="a" style="left:44px;top:204px" width="13" height="14"><path d="M1.5 0.5H8.5L11.5 3.5V12.5L10 11.5L8.5 12.8L7 11.5L5.5 12.8L4 11.5L2.5 12.8L1.5 12Z" fill="#e4edf9" stroke="#3e4e70"/><path d="M8.5 0.5V3.5H11.5" fill="#fff" stroke="#3e4e70"/><path d="M3 5.5H8M3 7.5H10M3 9.5H10" stroke="#2f6ac4" stroke-width="1"/></svg>
<div class="tr" style="left:63px;top:204px;letter-spacing:0.2px">do  (do Tab)</div>
<div class="dh" style="left:32px;top:231px;width:11px"></div>
<svg class="a" style="left:44px;top:224px" width="13" height="14"><path d="M1.5 0.5H8.5L11.5 3.5V12.5L10 11.5L8.5 12.8L7 11.5L5.5 12.8L4 11.5L2.5 12.8L1.5 12Z" fill="#e4edf9" stroke="#3e4e70"/><path d="M8.5 0.5V3.5H11.5" fill="#fff" stroke="#3e4e70"/><path d="M3 5.5H8M3 7.5H10M3 9.5H10" stroke="#2f6ac4" stroke-width="1"/></svg>
<div class="tr" style="left:63px;top:224px;letter-spacing:0.2px">for  (for Tab)</div>
<div class="dh" style="left:32px;top:251px;width:11px"></div>
<svg class="a" style="left:44px;top:244px" width="13" height="14"><path d="M1.5 0.5H8.5L11.5 3.5V12.5L10 11.5L8.5 12.8L7 11.5L5.5 12.8L4 11.5L2.5 12.8L1.5 12Z" fill="#e4edf9" stroke="#3e4e70"/><path d="M8.5 0.5V3.5H11.5" fill="#fff" stroke="#3e4e70"/><path d="M3 5.5H8M3 7.5H10M3 9.5H10" stroke="#2f6ac4" stroke-width="1"/></svg>
<div class="tr" style="left:63px;top:244px;letter-spacing:0.2px">foreach  (fe Tab)</div>
<div class="dh" style="left:32px;top:271px;width:11px"></div>
<svg class="a" style="left:44px;top:264px" width="13" height="14"><path d="M1.5 0.5H8.5L11.5 3.5V12.5L10 11.5L8.5 12.8L7 11.5L5.5 12.8L4 11.5L2.5 12.8L1.5 12Z" fill="#e4edf9" stroke="#3e4e70"/><path d="M8.5 0.5V3.5H11.5" fill="#fff" stroke="#3e4e70"/><path d="M3 5.5H8M3 7.5H10M3 9.5H10" stroke="#2f6ac4" stroke-width="1"/></svg>
<div class="tr" style="left:63px;top:264px;letter-spacing:0.2px">fprintf ...  (fprintf Tab)</div>
<div class="dh" style="left:32px;top:291px;width:11px"></div>
<svg class="a" style="left:44px;top:284px" width="13" height="14"><path d="M1.5 0.5H8.5L11.5 3.5V12.5L10 11.5L8.5 12.8L7 11.5L5.5 12.8L4 11.5L2.5 12.8L1.5 12Z" fill="#e4edf9" stroke="#3e4e70"/><path d="M8.5 0.5V3.5H11.5" fill="#fff" stroke="#3e4e70"/><path d="M3 5.5H8M3 7.5H10M3 9.5H10" stroke="#2f6ac4" stroke-width="1"/></svg>
<div class="tr" style="left:63px;top:284px;letter-spacing:0.2px">if  (if Tab)</div>
<div class="dh" style="left:32px;top:311px;width:11px"></div>
<svg class="a" style="left:44px;top:304px" width="13" height="14"><path d="M1.5 0.5H8.5L11.5 3.5V12.5L10 11.5L8.5 12.8L7 11.5L5.5 12.8L4 11.5L2.5 12.8L1.5 12Z" fill="#e4edf9" stroke="#3e4e70"/><path d="M8.5 0.5V3.5H11.5" fill="#fff" stroke="#3e4e70"/><path d="M3 5.5H8M3 7.5H10M3 9.5H10" stroke="#2f6ac4" stroke-width="1"/></svg>
<div class="tr" style="left:63px;top:304px;letter-spacing:0.2px">main()  (main Tab)</div>
<div class="dh" style="left:32px;top:331px;width:11px"></div>
<svg class="a" style="left:44px;top:324px" width="13" height="14"><path d="M1.5 0.5H8.5L11.5 3.5V12.5L10 11.5L8.5 12.8L7 11.5L5.5 12.8L4 11.5L2.5 12.8L1.5 12Z" fill="#e4edf9" stroke="#3e4e70"/><path d="M8.5 0.5V3.5H11.5" fill="#fff" stroke="#3e4e70"/><path d="M3 5.5H8M3 7.5H10M3 9.5H10" stroke="#2f6ac4" stroke-width="1"/></svg>
<div class="tr" style="left:63px;top:324px;letter-spacing:0.2px">namespace  (ns Tab)</div>
<div class="dh" style="left:32px;top:351px;width:11px"></div>
<svg class="a" style="left:44px;top:344px" width="13" height="14"><path d="M1.5 0.5H8.5L11.5 3.5V12.5L10 11.5L8.5 12.8L7 11.5L5.5 12.8L4 11.5L2.5 12.8L1.5 12Z" fill="#e4edf9" stroke="#3e4e70"/><path d="M8.5 0.5V3.5H11.5" fill="#fff" stroke="#3e4e70"/><path d="M3 5.5H8M3 7.5H10M3 9.5H10" stroke="#2f6ac4" stroke-width="1"/></svg>
<div class="tr" style="left:63px;top:344px;letter-spacing:0.2px">printf ...  (printf Tab)</div>
<div class="dh" style="left:32px;top:371px;width:11px"></div>
<svg class="a" style="left:44px;top:364px" width="13" height="14"><path d="M1.5 0.5H8.5L11.5 3.5V12.5L10 11.5L8.5 12.8L7 11.5L5.5 12.8L4 11.5L2.5 12.8L1.5 12Z" fill="#e4edf9" stroke="#3e4e70"/><path d="M8.5 0.5V3.5H11.5" fill="#fff" stroke="#3e4e70"/><path d="M3 5.5H8M3 7.5H10M3 9.5H10" stroke="#2f6ac4" stroke-width="1"/></svg>
<div class="tr" style="left:63px;top:364px;letter-spacing:0.2px">Read File Into Vector</div>
<div class="dh" style="left:32px;top:391px;width:11px"></div>
<svg class="a" style="left:44px;top:384px" width="13" height="14"><path d="M1.5 0.5H8.5L11.5 3.5V12.5L10 11.5L8.5 12.8L7 11.5L5.5 12.8L4 11.5L2.5 12.8L1.5 12Z" fill="#e4edf9" stroke="#3e4e70"/><path d="M8.5 0.5V3.5H11.5" fill="#fff" stroke="#3e4e70"/><path d="M3 5.5H8M3 7.5H10M3 9.5H10" stroke="#2f6ac4" stroke-width="1"/></svg>
<div class="tr" style="left:63px;top:384px;letter-spacing:0.2px">std::map  (map Tab)</div>
<div class="dh" style="left:32px;top:411px;width:11px"></div>
<svg class="a" style="left:44px;top:404px" width="13" height="14"><path d="M1.5 0.5H8.5L11.5 3.5V12.5L10 11.5L8.5 12.8L7 11.5L5.5 12.8L4 11.5L2.5 12.8L1.5 12Z" fill="#e4edf9" stroke="#3e4e70"/><path d="M8.5 0.5V3.5H11.5" fill="#fff" stroke="#3e4e70"/><path d="M3 5.5H8M3 7.5H10M3 9.5H10" stroke="#2f6ac4" stroke-width="1"/></svg>
<div class="tr" style="left:63px;top:404px;letter-spacing:0.2px">std::vector  (vector Tab)</div>
<div class="dh" style="left:32px;top:431px;width:11px"></div>
<svg class="a" style="left:44px;top:424px" width="13" height="14"><path d="M1.5 0.5H8.5L11.5 3.5V12.5L10 11.5L8.5 12.8L7 11.5L5.5 12.8L4 11.5L2.5 12.8L1.5 12Z" fill="#e4edf9" stroke="#3e4e70"/><path d="M8.5 0.5V3.5H11.5" fill="#fff" stroke="#3e4e70"/><path d="M3 5.5H8M3 7.5H10M3 9.5H10" stroke="#2f6ac4" stroke-width="1"/></svg>
<div class="tr" style="left:63px;top:424px;letter-spacing:0.2px">struct  (st Tab)</div>
</div><!--/tree-->

<!-- tree scrollbars -->
<div class="a" style="left:193px;top:153px;width:17px;height:428px;background:#f0f0f0"></div>
<svg class="a" style="left:196px;top:159px" width="10" height="7"><path d="M1 5.5L5 1.5L9 5.5" stroke="#3e3e3e" stroke-width="1.8" fill="none"/></svg>
<div class="a" style="left:193px;top:260px;width:15px;height:156px;background:#cdcdcd"></div>
<svg class="a" style="left:196px;top:569px" width="10" height="7"><path d="M1 1.5L5 5.5L9 1.5" stroke="#3e3e3e" stroke-width="1.8" fill="none"/></svg>
<div class="a" style="left:2px;top:581px;width:191px;height:17px;background:#f0f0f0"></div>
<div class="a" style="left:193px;top:581px;width:17px;height:17px;background:#f0f0f0"></div>
<svg class="a" style="left:8px;top:585px" width="7" height="10"><path d="M5.5 1L1.5 5L5.5 9" stroke="#606060" stroke-width="1.6" fill="none"/></svg>
<div class="a" style="left:20px;top:582px;width:104px;height:15px;background:#cdcdcd"></div>
<svg class="a" style="left:181px;top:585px" width="7" height="10"><path d="M1.5 1L5.5 5L1.5 9" stroke="#606060" stroke-width="1.6" fill="none"/></svg>

<!-- tab bar -->
<div class="a" style="left:213px;top:130px;width:98px;height:26px;background:#fff;border:1px solid #d9d9d9;border-bottom:none"></div>
<svg class="a" style="left:223px;top:133px" width="13" height="16"><path d="M0.5 0.5H8.5L12.5 4.5V15.5H0.5Z" fill="#fff" stroke="#777"/><path d="M8.5 0.5V4.5H12.5" fill="none" stroke="#777"/><path d="M2.5 4.5H7M2.5 6.5H10.5M2.5 8.5H10.5M2.5 10.5H10.5M2.5 12.5H10.5" stroke="#8a8a8a"/></svg>
<div class="t" style="left:243px;top:135px;font-size:13px">dup.txt</div>
<svg class="a" style="left:294px;top:140px" width="9" height="9"><path d="M0.5 0.5L8.5 8.5M8.5 0.5L0.5 8.5" stroke="#858585" stroke-width="1.3"/></svg>

<!-- editor -->
<div class="a" style="left:211px;top:155px;width:685px;height:445px;background:#fff;border-right:1px solid #dcdcdc;border-bottom:1px solid #dcdcdc"></div>
<div class="a" style="left:217px;top:156px;width:675px;height:439px;border-top:1px solid #a0a0a0;border-left:1px solid #a0a0a0;border-right:1px solid #fff;border-bottom:1px solid #fff"></div>
<div class="a" style="left:218px;top:157px;width:673px;height:437px;background:#696969"></div>
<div id="ed" class="a">
<div class="ln" style="top:6px">00007FF84DD63670 | 8B 14 25 30 03 FE 7F</div>
<i class="pp" style="left:405px;top:6px"></i>
<div class="p" style="left:412.7px;top:6px"><b class="k">mov</b> <b class="r">edx</b>,<span style="letter-spacing:1px">dword ptr</span></div>
<div class="ln" style="top:31px">ds:[7FFE0330]</div>
<i class="pp" style="left:157px;top:31px"></i>
<svg class="dn" style="left:161px;top:32px" width="8" height="12"><path d="M3.5 0V10.5M0.5 6.5L3.5 10L6.5 6.5" stroke="#3a82de" stroke-width="1.2" fill="none"/></svg>
<div class="ln" style="top:56px">00007FF84DD63677 | 8D 4E 40</div>
<i class="pp" style="left:375px;top:56px"></i>
<div class="p" style="left:382.7px;top:56px"><b class="k">lea</b> <b class="r">ecx</b>,<span style="letter-spacing:1px">dword ptr</span></div>
<div class="ln" style="top:81px">ds:[<span style="letter-spacing:0.5px">rsi+40</span>]</div>
<i class="pp" style="left:142px;top:81px"></i>
<svg class="dn" style="left:146px;top:82px" width="8" height="12"><path d="M3.5 0V10.5M0.5 6.5L3.5 10L6.5 6.5" stroke="#3a82de" stroke-width="1.2" fill="none"/></svg>
<div class="ln" style="top:106px">00007FF84DD6367A | 8B C2</div>
<i class="pp" style="left:369px;top:106px"></i>
<div class="p" style="left:376.7px;top:106px"><b class="k">mov</b> <b class="r">eax</b>,<b class="r">edx</b></div>
<i class="pp" style="left:618px;top:106px"></i>
<svg class="dn" style="left:622px;top:107px" width="8" height="12"><path d="M3.5 0V10.5M0.5 6.5L3.5 10L6.5 6.5" stroke="#3a82de" stroke-width="1.2" fill="none"/></svg>
<div class="ln" style="top:131px">00007FF84DD6367C | BB 01 00 00 C0</div>
<i class="pp" style="left:394px;top:131px"></i>
<div class="p" style="left:401.7px;top:131px"><b class="k">mov</b></div>
<div class="ln" style="top:156px"><b class="r">ebx</b>,C0000001</div>
<i class="pp" style="left:234px;top:156px"></i>
<svg class="dn" style="left:238px;top:157px" width="8" height="12"><path d="M3.5 0V10.5M0.5 6.5L3.5 10L6.5 6.5" stroke="#3a82de" stroke-width="1.2" fill="none"/></svg>
<div class="ln" style="top:181px">00007FF84DD63681 | 83 E0 3F</div>
<i class="pp" style="left:372px;top:181px"></i>
<div class="p" style="left:379.7px;top:181px"><b class="k">and</b> <b class="r">eax</b>,3F</div>
<i class="pp" style="left:613px;top:181px"></i>
<svg class="dn" style="left:617px;top:182px" width="8" height="12"><path d="M3.5 0V10.5M0.5 6.5L3.5 10L6.5 6.5" stroke="#3a82de" stroke-width="1.2" fill="none"/></svg>
<div class="ln" style="top:206px">00007FF84DD63684 | 2B C8</div>
<i class="pp" style="left:367px;top:206px"></i>
<div class="p" style="left:374.7px;top:206px"><b class="k">sub</b> <b class="r">ecx</b>,<b class="r">eax</b></div>
<i class="pp" style="left:608px;top:206px"></i>
<svg class="dn" style="left:612px;top:207px" width="8" height="12"><path d="M3.5 0V10.5M0.5 6.5L3.5 10L6.5 6.5" stroke="#3a82de" stroke-width="1.2" fill="none"/></svg>
<div class="ln" style="top:231px">00007FF84DD63686 | 8B C2</div>
<i class="pp" style="left:367px;top:231px"></i>
<div class="p" style="left:374.7px;top:231px"><b class="k">mov</b> <b class="r">eax</b>,<b class="r">edx</b></div>
<i class="pp" style="left:616px;top:231px"></i>
<svg class="dn" style="left:620px;top:232px" width="8" height="12"><path d="M3.5 0V10.5M0.5 6.5L3.5 10L6.5 6.5" stroke="#3a82de" stroke-width="1.2" fill="none"/></svg>
<div class="ln" style="top:256px">00007FF84DD63688 | 49 D3 C8</div>
<i class="pp" style="left:377px;top:256px"></i>
<div class="p" style="left:384.7px;top:256px"><b class="k">ror</b> <span style="letter-spacing:0.6px">r8,cl</span></div>
<i class="pp" style="left:599px;top:256px"></i>
<svg class="dn" style="left:603px;top:257px" width="8" height="12"><path d="M3.5 0V10.5M0.5 6.5L3.5 10L6.5 6.5" stroke="#3a82de" stroke-width="1.2" fill="none"/></svg>
<div class="ln" style="top:281px">00007FF84DD6368B | 4C 33 C0</div>
<i class="pp" style="left:377px;top:281px"></i>
<div class="p" style="left:384.7px;top:281px"><b class="k">xor</b> <span style="letter-spacing:0.3px">r8,rax</span></div>
<i class="pp" style="left:607px;top:281px"></i>
<svg class="dn" style="left:611px;top:282px" width="8" height="12"><path d="M3.5 0V10.5M0.5 6.5L3.5 10L6.5 6.5" stroke="#3a82de" stroke-width="1.2" fill="none"/></svg>
<div class="ln" style="top:306px">00007FF84DD6368E | 4C 89 07</div>
<i class="pp" style="left:374px;top:306px"></i>
<div class="p" style="left:381.7px;top:306px"><b class="k">mov</b> <span style="letter-spacing:1px">qword ptr</span></div>
<div class="ln" style="top:331px">ds:[<span style="letter-spacing:0.45px">rdi],r8</span></div>
<i class="pp" style="left:154px;top:331px"></i>
<svg class="dn" style="left:158px;top:332px" width="8" height="12"><path d="M3.5 0V10.5M0.5 6.5L3.5 10L6.5 6.5" stroke="#3a82de" stroke-width="1.2" fill="none"/></svg>
<div class="ln" style="top:356px">00007FF84DD63691 | 0F 45 DE</div>
<i class="pp" style="left:376px;top:356px"></i>
<div class="p" style="left:383.7px;top:356px"><b class="k">cmovne</b> <b class="r">ebx</b>,<b class="r">esi</b></div>
<i class="pp" style="left:8px;top:381px"></i>
<svg class="dn" style="left:12px;top:382px" width="8" height="12"><path d="M3.5 0V10.5M0.5 6.5L3.5 10L6.5 6.5" stroke="#3a82de" stroke-width="1.2" fill="none"/></svg>
<div class="ln" style="top:406px">00007FF84DD63694 | E9 48 01 00 00</div>
<i class="pp" style="left:388px;top:406px"></i>
<div class="p" style="left:395.7px;top:406px"><b class="k">jmp</b></div>
<div class="ln" style="top:431px">ntdll.7FF84DD637E1</div>
<i class="pp" style="left:252px;top:431px"></i>
<svg class="dn" style="left:256px;top:432px" width="8" height="12"><path d="M3.5 0V10.5M0.5 6.5L3.5 10L6.5 6.5" stroke="#3a82de" stroke-width="1.2" fill="none"/></svg>
</div><!--/ed-->


<!-- editor scrollbar -->
<svg class="a" style="left:878px;top:163px" width="9" height="7"><path d="M0.8 6L4.5 2L8.2 6" stroke="#6c6c6c" stroke-width="2" fill="none"/></svg>
<div class="a" style="left:875px;top:258px;width:15px;height:33px;background:#626262"></div>
<svg class="a" style="left:878px;top:582px" width="9" height="7"><path d="M0.8 1L4.5 5L8.2 1" stroke="#6c6c6c" stroke-width="2" fill="none"/></svg>

<!-- status bar -->
<div class="a" style="left:1px;top:600px;width:896px;height:22px;background:#f0f0f0"></div>
<div class="st" style="left:3px;letter-spacing:0.76px">11.4 KB (11,715 字节) , 111 行。</div>
<div class="st" style="left:431px;letter-spacing:0.68px">x86 Assembler</div>
<div class="ss" style="left:519px"></div>
<div class="st" style="left:523px;letter-spacing:0.65px">行 7,列 70</div>
<div class="ss" style="left:590px"></div>
<div class="st" style="left:594px;letter-spacing:0.3px">简体中文(GB2312)</div>
<div class="ss" style="left:699px"></div>
<div class="ss" style="left:731px"></div>
<div class="ss" style="left:763px"></div>
<div class="st" style="left:767px;letter-spacing:1.6px">0 字符</div>
<div class="ss" style="left:806px"></div>
<div class="st" style="left:810px;letter-spacing:1.25px">0/111 行</div>
<div class="ss" style="left:877px"></div>
<svg class="a" style="left:886px;top:611px" width="10" height="10"><path d="M7 1h2v2h-2zM4 4h2v2h-2zM7 4h2v2h-2zM1 7h2v2h-2zM4 7h2v2h-2zM7 7h2v2h-2z" fill="#a8a8a8"/></svg>
<div class="a" style="left:896px;top:31px;width:1px;height:591px;background:#c6eef5"></div>
<div class="a" style="left:1px;top:31px;width:1px;height:591px;background:#e4f6fa"></div>
</body></html>
